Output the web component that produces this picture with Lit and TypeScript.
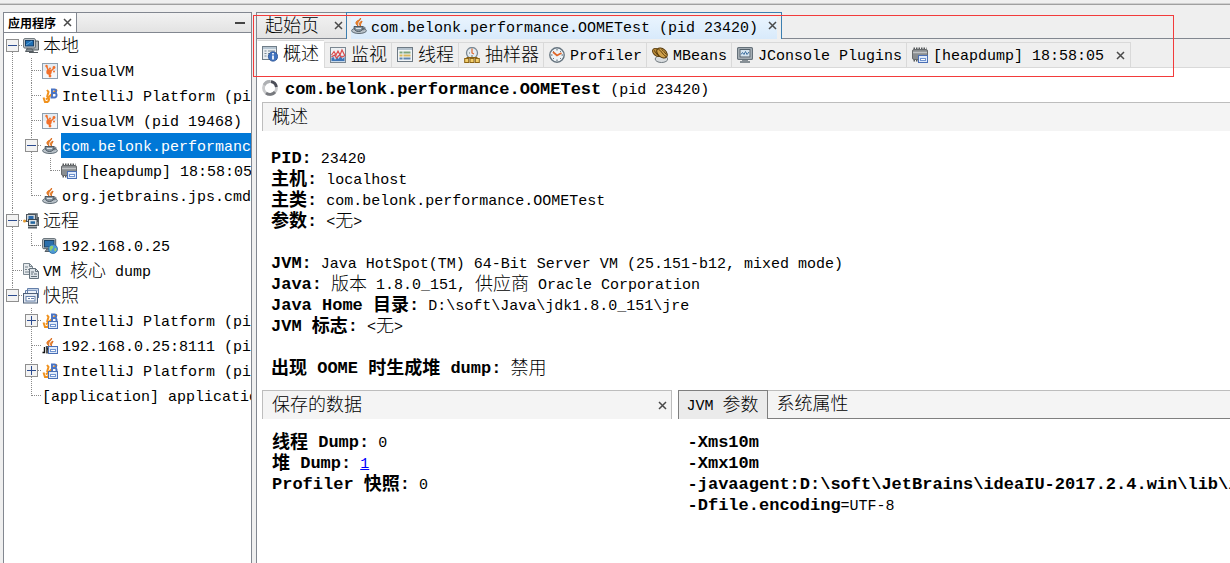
import { LitElement, html, svg, css, nothing, TemplateResult } from "lit";
import { customElement, state } from "lit/decorators.js";

/** Wraps runs of Chinese characters, which are set larger than the Latin cells. */
const t = (s: string) =>
  s.split(/([\u4e00-\u9fff]+)/).map((p) =>
    /[\u4e00-\u9fff]/.test(p) ? html`<span class="c">${p}</span>` : p
  );

const stamp = svg`<rect x="6.5" y="8.5" width="9" height="7" fill="#dfeafa" stroke="#4a6fb5"/><rect x="8.5" y="11.5" width="5" height="2" fill="#fff" stroke="#6f93d0"/>`;
const jb = svg`<path d="M5 2l1.500 2L5 9" fill="none" stroke="#f0911c" stroke-width="2"/><path d="M1.500 9.500L3 14h2.500c2-1.500 1.500-4 .5-5.500M4 11.500L15 1.500" fill="none" stroke="#f0911c" stroke-width="2"/><path d="M9 1.500h3.500c2.500 0 2 3.500 0 3.500 3 0 2.500 4.500 0 4.500H8.500M10 1.500v8M10 5h3" fill="none" stroke="#4a74c4" stroke-width="1.900"/>`;
const flame = svg`<path d="M9.500 0c1 2.500-4.500 3.500-2.500 8C4 5.500 4.500 3.500 7 2.500 8.500 2 9 1 9.500 0zM11 3c.5 1.500-2 2-1.500 5C7 5.500 8.500 4.500 11 3z" fill="#f08a2c" stroke="#d8691a" stroke-width=".9"/>`;
const cup = svg`<ellipse cx="8" cy="12.700" rx="7.400" ry="2.800" fill="#b9c2c9" stroke="#5d6a74"/><path d="M3 8.500h9c0 3-1.500 5-4.500 5S3 11.500 3 8.500z" fill="#8997a2" stroke="#4d5963"/><path d="M12 9c3-.5 2.500 3-.8 2.800" fill="none" stroke="#4d5963"/><path d="M5 10.500h5" stroke="#dfe5ea"/>${flame}`;

const ICONS: Record<string, TemplateResult | any> = {
  pcs: svg`<path d="M4 3h11.500v9H4zM6 14.500h9" fill="#aeb4b8" stroke="#555c61"/><rect x=".7" y=".7" width="11.600" height="9.300" rx="1" fill="#d7dbde" stroke="#565f66"/><rect x="2.500" y="2.500" width="8" height="5.500" fill="#1f6fb4" stroke="#173f68"/><path d="M3 7l6-4" stroke="#5ca4dc"/><path d="M4 11h5l1.500 2.500h-8z" fill="#8a9298" stroke="#555c61"/>`,
  visualvm: svg`<rect x=".5" y=".5" width="15" height="15" fill="#f4f7fa" stroke="#8f9fae"/><path d="M1 1h14v7H1z" fill="#e5ecf2"/><path d="M4.500 3l2.500 6M12 5l-4 4M7 9l1 4" stroke="#f2702a" stroke-width="1.500"/><circle cx="4.500" cy="3" r="1.200" fill="#f2702a"/><circle cx="8" cy="5.500" r="1" fill="#f2702a"/><circle cx="12" cy="4.500" r="1.400" fill="#f2702a"/><circle cx="7" cy="9" r="2.700" fill="#f2702a"/><circle cx="12" cy="8.500" r="1" fill="#f2702a"/><circle cx="8" cy="13" r="1.400" fill="#f2702a"/>`,
  jb,
  cup,
  heap: svg`<path d="M1.500 1.500h13M1.500 13.500h5" stroke="#55585a" stroke-width="2" stroke-dasharray="1.500 1"/><rect x=".5" y="2.500" width="15" height="10" rx="1.500" fill="#898d90" stroke="#66696b"/><path d="M1 5.500h14" stroke="#c0c3c5" stroke-width="1.500"/>${stamp}`,
  remote: svg`<path d="M1 8h3M5 1h9v8M15.500 4v9" stroke="#565f66" fill="none" stroke-width="1.500"/><rect x="3.500" y="1.500" width="9" height="7" fill="#cdd3d7" stroke="#4c555c"/><rect x="5.500" y="3" width="5" height="3.500" fill="#2a6aab"/><rect x="5.500" y="6.500" width="8.500" height="6" fill="#dfe3e6" stroke="#3c464e"/><rect x="7.500" y="8.300" width="4.500" height="2.500" fill="#23659f"/><path d="M5 14.500h9" stroke="#565f66" stroke-width="2"/><circle cx="1.500" cy="8" r="1.500" fill="#e79a2e"/>`,
  host: svg`<rect x=".7" y=".7" width="13" height="10" rx="1" fill="#c6ccd0" stroke="#4e5a63"/><rect x="2.500" y="2.500" width="9.500" height="6.500" fill="#2b70ad" stroke="#1e4667"/><path d="M5 11h4l1 2.500H3z" fill="#858e95" stroke="#555e65"/><circle cx="11" cy="11" r="4.500" fill="#4d9ad8" stroke="#2c6aa0" stroke-width=".8"/><path d="M8 8.500c2-1.500 4-.5 3 1.500s-2 1-1.500 3.500c-2-1-2.500-3.500-1.500-5zM13 10c2 0 2 2 .5 3.500-1.500 0-1.500-2.500-.5-3.500z" fill="#8fd06a"/>`,
  core: svg`<path d="M.5.500h6l3 3v8h-9z" fill="#e5e9ec" stroke="#7d8992"/><path d="M6.500.500v3h3M2 4h3M2 6.500h2M5 6.500h3M2 9h5" fill="none" stroke="#77838c"/><path d="M6.500 5.500h6l3 3v7h-9z" fill="#dde3e8" stroke="#64717b"/><path d="M12.500 5.500v3h3M8 9h3M8 11h2M11 11h3M8 13.500h6" fill="none" stroke="#64717b"/>`,
  snaps: svg`<path d="M4.500 9V.500h11V10M2.500 11V2.500h11V12" fill="#eef3fa" stroke="#647fa9"/><path d="M5 2h10" stroke="#98b0d4"/><rect x=".5" y="5.500" width="14" height="9.500" fill="#e3e9f1" stroke="#4f6079"/><rect x="3" y="8.500" width="9" height="4.500" fill="#fff" stroke="#6580aa"/><path d="M5 10.500h2M8 10.500h3" stroke="#6580aa"/>`,
  jbsnap: svg`${jb}${stamp}`,
  jcupsnap: svg`${flame}<path d="M4 8.500h7c0 3-1 5-4 5z" fill="#8997a2" stroke="#4d5963"/><path d="M2.500 9v5.500H.5M5 9.500v6" stroke="#111" stroke-width="1.400" fill="none"/>${stamp}`,
  overview: svg`<rect x=".5" y=".5" width="14" height="13" fill="#e8edf1" stroke="#6f7d88"/><path d="M1 2h13" stroke="#b7c6d2" stroke-width="2"/><path d="M2.500 5h2M6 5h7M2.500 7.500h2M6 7.500h4M2.500 10h2M6 10h2" stroke="#7b8a95"/><circle cx="11" cy="10.500" r="4.700" fill="#3f72be" stroke="#244c8c" stroke-width=".7"/><path d="M11 9.500v4M11 7v1.500" stroke="#fff" stroke-width="1.700"/>`,
  monitor: svg`<rect x=".5" y=".5" width="15" height="15" fill="#edf1f4" stroke="#7b8791"/><path d="M1 8h14v7H1z" fill="#c8d9ea"/><path d="M1.500 14v-3l2-1 1.500 3 2-3 1.500 2 2-3 2 3 2-2v4" fill="#3e75b7"/><path d="M1.500 8L4 4.500 6 8l2-4 2 4 2-5 3 6M1.500 10l3-2 2 3 3-3 2 2 3-1" fill="none" stroke="#dd4a4a" stroke-width="1.200"/>`,
  threads: svg`<rect x=".5" y=".5" width="15" height="14" fill="#f2f5f7" stroke="#6e7a84"/><path d="M1 2h14" stroke="#b4c2cd" stroke-width="2"/><path d="M2.500 5.500h11" stroke="#7da57a" stroke-width="2"/><path d="M2.500 8.500h11" stroke="#d9b75b" stroke-width="2"/><path d="M2.500 11.500h11" stroke="#5f86b0" stroke-width="2"/><path d="M6 4v9" stroke="#e9eef1"/>`,
  sampler: svg`<circle cx="8" cy="6" r="5.500" fill="#e5ecf2" stroke="#7a8894" stroke-width="1.300"/><path d="M8 1.500V6l2 1" fill="none" stroke="#e0672a" stroke-width="1.200"/><path d="M5 6h1M8 8v2" stroke="#66746f"/><path d="M3 10.500h10M3 10v3M8 10v3M13 10v3" stroke="#8c6415" fill="none"/><rect x=".7" y="11.500" width="4" height="4" fill="#f3cf6d" stroke="#8c6415"/><rect x="6" y="11.500" width="4" height="4" fill="#f3cf6d" stroke="#8c6415"/><rect x="11.300" y="11.500" width="4" height="4" fill="#f3cf6d" stroke="#8c6415"/>`,
  profiler: svg`<circle cx="8" cy="8" r="7.200" fill="#eef3f7" stroke="#66747f" stroke-width="1.400"/><path d="M8 2v1.500M8 12.500V14M2 8h1.500M12.500 8H14M4 4l.8.8M12 4l-.8.8M4 12l.8-.8M12 12l-.8-.8" stroke="#51606b"/><path d="M4 5l4 3.500L12.500 6" fill="none" stroke="#e0672a" stroke-width="1.800"/>`,
  beans: svg`<ellipse cx="9.500" cy="12" rx="6.300" ry="3.500" fill="#d8dcdf" stroke="#70797f"/><ellipse cx="5" cy="5.500" rx="5" ry="3.300" transform="rotate(40 5 5.500)" fill="#b98a3a" stroke="#553708"/><ellipse cx="10" cy="6" rx="6" ry="4" transform="rotate(40 10 6)" fill="#cfa04a" stroke="#553708"/><path d="M6.500 2.500c3 1 3 4 7.500 7M2 3.500c2 1 2 4 5.500 6M9.500 2.500c2 1 3 3 5 5" fill="none" stroke="#553708"/>`,
  jconsole: svg`<rect x=".6" y=".6" width="14.800" height="11.800" rx="1" fill="#b6bec4" stroke="#65717a" stroke-width="1.200"/><rect x="3" y="2.500" width="10" height="7.500" fill="#d5e4ef" stroke="#54616b"/><path d="M4 7.500l1.500-2 1.500 2 1.500-3 1.500 3L12 5" fill="none" stroke="#3d6f9f"/><path d="M5 13h6M3 15h10" stroke="#65717a" stroke-width="1.500"/>`,
  spinner: svg`<circle cx="8" cy="8" r="6.500" fill="none" stroke="#c9cacc" stroke-width="2.800"/><path d="M2 5A6.500 6.500 0 0 1 8 1.500" fill="none" stroke="#aeb0b3" stroke-width="2.800"/><path d="M9 1.600a6.500 6.500 0 0 1 5.400 5.400" fill="none" stroke="#4c4e58" stroke-width="2.800"/><path d="M13 12A6.500 6.500 0 0 1 4 13.100" fill="none" stroke="#77797e" stroke-width="2.800"/>`,
};

const icon = (n: string) =>
  html`<svg class="icon" viewBox="0 0 16 16" aria-hidden="true">${ICONS[n]}</svg>`;

const cross = html`<svg class="cross" viewBox="0 0 9 9" aria-hidden="true">
  <path d="M1 1l7 7M8 1l-7 7" fill="none" stroke="#4a4a4a" stroke-width="1.500" />
</svg>`;

/** Guide cells: v = line, t = tee, l = elbow, . = blank, - / + = expander. */
interface Row {
  guides: string;
  icon?: string;
  label: string;
  last?: boolean;
  first?: boolean;
}

const ROWS: Row[] = [
  { guides: "-", icon: "pcs", label: "本地", first: true },
  { guides: "vt", icon: "visualvm", label: "VisualVM" },
  { guides: "vt", icon: "jb", label: "IntelliJ Platform (pid" },
  { guides: "vt", icon: "visualvm", label: "VisualVM (pid 19468)" },
  { guides: "v-", icon: "cup", label: "com.belonk.performance" },
  { guides: "vvl", icon: "heap", label: "[heapdump] 18:58:05" },
  { guides: "vl", icon: "cup", label: "org.jetbrains.jps.cmdl" },
  { guides: "-", icon: "remote", label: "远程" },
  { guides: "vl", icon: "host", label: "192.168.0.25" },
  { guides: "t", icon: "core", label: "VM 核心 dump" },
  { guides: "-", icon: "snaps", label: "快照", last: true },
  { guides: ".+", icon: "jbsnap", label: "IntelliJ Platform (pid" },
  { guides: ".t", icon: "jcupsnap", label: "192.168.0.25:8111 (pid" },
  { guides: ".+", icon: "jbsnap", label: "IntelliJ Platform (pid" },
  { guides: ".l", label: "[application] application" },
];

const VIEWS = [
  ["overview", "概述"],
  ["monitor", "监视"],
  ["threads", "线程"],
  ["sampler", "抽样器"],
  ["profiler", "Profiler"],
  ["beans", "MBeans"],
  ["jconsole", "JConsole Plugins"],
  ["heap", "[heapdump] 18:58:05"],
];

const FACTS: ([string, string] | null)[] = [
  ["PID:", "23420"],
  ["主机:", "localhost"],
  ["主类:", "com.belonk.performance.OOMETest"],
  ["参数:", "<无>"],
  null,
  ["JVM:", "Java HotSpot(TM) 64-Bit Server VM (25.151-b12, mixed mode)"],
  ["Java:", "版本 1.8.0_151, 供应商 Oracle Corporation"],
  ["Java Home 目录:", "D:\\soft\\Java\\jdk1.8.0_151\\jre"],
  ["JVM 标志:", "<无>"],
  null,
  ["出现 OOME 时生成堆 dump:", "禁用"],
];

const ARGS: [string, string][] = [
  ["-Xms10m", ""],
  ["-Xmx10m", ""],
  ["-javaagent:D:\\soft\\JetBrains\\ideaIU-2017.2.4.win\\lib\\idea", ""],
  ["-Dfile.encoding", "=UTF-8"],
];

@customElement("app-root")
export class AppRoot extends LitElement {
  @state() private selected = 4;
  @state() private view = 0;

  static styles = css`
    :host {
      display: flex;
      flex-direction: column;
      height: 100vh;
      overflow: hidden;
      background: #efefef;
      color: #000;
      font: 15px/21px "Liberation Mono", "Noto Sans CJK SC", monospace;
    }
    * { box-sizing: border-box; }
    button {
      font: inherit;
      color: inherit;
      background: none;
      border: 0;
      margin: 0;
      padding: 0;
      white-space: pre;
    }
    .c {
      font-size: 18px;
      font-weight: 300;
      line-height: 0;
      vertical-align: -1px;
    }
    b { font-size: 17px; line-height: 0; }
    b .c { font-weight: 700; }
    .icon { width: 16px; height: 16px; flex: none; display: block; }
    .cross { width: 9px; height: 9px; display: block; }
    .toolbar {
      flex: none;
      height: 5px;
      border-bottom: 1px solid #a0a0a0;
      box-shadow: inset 0 -1px #cfcfcf;
    }
    .desk {
      flex: 1;
      min-height: 0;
      display: grid;
      grid-template-columns: 249px minmax(0, 1fr);
      gap: 4px;
      padding: 7px 0 0 3px;
      position: relative;
    }
    .side {
      display: flex;
      flex-direction: column;
      min-width: 0;
      background: #fff;
      border: 1px solid #828790;
      border-bottom: 0;
    }
    .side-head {
      flex: none;
      display: flex;
      align-items: center;
      height: 20px;
      border-bottom: 1px solid #828790;
      background: linear-gradient(#f2f2f2, #e3e3e3);
    }
    .side-tab {
      display: flex;
      align-items: center;
      gap: 7px;
      align-self: stretch;
      padding: 0 4px;
      background: #fff;
      border-right: 1px solid #828790;
      font: bold 12px/19px "Noto Sans CJK SC", sans-serif;
    }
    .min { width: 10px; height: 2px; background: #444; margin: 0 6px 0 auto; }
    .tree { list-style: none; margin: 0; padding: 0; overflow: hidden; }
    .row { display: flex; align-items: center; height: 25px; }
    .guide { width: 19px; height: 25px; flex: none; display: block; }
    .guide:first-child { margin-left: -1px; }
    .row .icon { margin: 0 3px 0 1px; }
    .node {
      flex: 1;
      min-width: 0;
      height: 25px;
      padding: 3px 0 0 1px;
      text-align: left;
      overflow: hidden;
    }
    .node.on { background: #0078d7; color: #fff; }
    .main {
      display: flex;
      flex-direction: column;
      min-width: 0;
      background: #fff;
      border-left: 1px solid #828790;
    }
    .docs {
      flex: none;
      display: flex;
      height: 27px;
      background: linear-gradient(#828790, #828790) bottom / 100% 1px no-repeat #efefef;
    }
    .doc {
      display: flex;
      align-items: center;
      padding: 4px 3px 0 8px;
      border-top: 1px solid #828790;
    }
    .start {
      gap: 15px;
      border-bottom: 1px solid #828790;
      background: linear-gradient(#f2f2f2, #e3e3e3);
    }
    .current {
      gap: 4px;
      padding: 4px 4px 0;
      border: 1px solid #3c7fb1;
      border-bottom: 0;
      background: linear-gradient(#e9f4fe, #d8eafb) content-box, #efefef;
    }
    .doc .icon { margin-bottom: 4px; }
    .doc .cross { margin-bottom: 5px; }
    .current .cross { margin-left: 6px; }
    .views {
      flex: none;
      display: flex;
      align-items: flex-end;
      height: 29px;
      background: linear-gradient(#d9d9d9, #d9d9d9) bottom / 100% 1px no-repeat #efefef;
    }
    .view {
      display: flex;
      align-items: center;
      gap: 5px;
      height: 26px;
      padding: 3px 4px 0 5px;
      border: solid #d9d9d9;
      border-width: 1px 0 1px 1px;
    }
    .view:last-child { border-right-width: 1px; }
    .view .icon { margin-bottom: 3px; }
    .view .cross { margin: 0 1px 3px 7px; }
    .view.on {
      height: 28px;
      padding: 2px 5px 0 4px;
      background: #fff;
      border-bottom-color: #fff;
      border-left-color: #fff;
    }
    .body { padding: 10px 0 0 5px; overflow: hidden; }
    .title {
      display: flex;
      align-items: center;
      gap: 7px;
      height: 24px;
      margin: 0;
      font: inherit;
      white-space: pre;
    }
    .title .icon { margin-bottom: 5px; }
    .bar {
      display: flex;
      align-items: center;
      justify-content: space-between;
      height: 29px;
      margin: 0;
      padding: 2px 4px 0 9px;
      border: solid #bdbdbd;
      border-width: 1px 0 0 1px;
      background: #f4f4f4;
      font: inherit;
    }
    .bar .cross { margin-bottom: 2px; }
    .facts { margin: 0; padding: 18px 0 10px 9px; }
    .fact, .blank { height: 21px; white-space: pre; }
    .fact dt, .fact dd { display: inline; margin: 0; }
    .split {
      display: grid;
      grid-template-columns: minmax(0, 410fr) minmax(0, 553fr);
      gap: 6px;
    }
    .saved .bar { border-right-width: 1px; }
    .lines { margin: 0; padding: 14px 0 0 10px; }
    .seg { display: flex; height: 29px; background: #f4f4f4; }
    .seg button {
      padding: 2px 9px 0;
      border: solid #bdbdbd;
      border-width: 1px 0;
      border-bottom-color: #7f7f7f;
    }
    .seg button.on {
      padding: 2px 8px 0;
      background: #ebebeb;
      border: solid #7f7f7f;
      border-width: 1px 1px 0;
    }
    .seg .rest { flex: 1; border-top: 1px solid #bdbdbd; border-bottom: 1px solid #7f7f7f; }
    a { color: #00f; }
    .mark {
      position: absolute;
      left: 253px;
      right: 56px;
      top: 10px;
      height: 62px;
      border: 1px solid #f23b3b;
      pointer-events: none;
    }
  `;

  private guide(kind: string, row: Row) {
    const dots = (d: string) =>
      svg`<path d=${d} fill="none" stroke="#8a8a8a" stroke-dasharray="1 1" />`;
    if (kind === "-" || kind === "+") {
      const above = row.first ? nothing : dots("M9.5 0V6");
      const below = row.last ? nothing : dots("M9.5 19V25");
      return html`<svg class="guide" viewBox="0 0 19 25" role="img" aria-label=${kind === "-" ? "折叠" : "展开"}>
        ${above}${below}${dots("M16 12.500H19")}
        <rect x="3.500" y="6.500" width="12" height="12" fill="#f3f3f3" stroke="#8f8f8f" />
        <path d="M5 12.500h9" stroke="#2b4b8f" />
        ${kind === "+" ? svg`<path d="M9.500 8v9" stroke="#2b4b8f" />` : nothing}
      </svg>`;
    }
    const paths: Record<string, string> = {
      v: "M9.5 0V25",
      t: "M9.5 0V25M10 12.5H19",
      l: "M9.5 0V13M10 12.5H19",
    };
    return html`<svg class="guide" viewBox="0 0 19 25" aria-hidden="true">
      ${paths[kind] ? dots(paths[kind]) : nothing}
    </svg>`;
  }

  render() {
    return html`
      <div class="toolbar"></div>
      <div class="desk">
        <aside class="side">
          <div class="side-head">
            <div class="side-tab">应用程序 ${cross}</div>
            <span class="min"></span>
          </div>
          <ul class="tree">
            ${ROWS.map(
              (r, i) => html`<li class="row">
                ${[...r.guides].map((k) => this.guide(k, r))}${r.icon ? icon(r.icon) : nothing}
                <button class="node ${i === this.selected ? "on" : ""}" @click=${() => (this.selected = i)}>${t(r.label)}</button>
              </li>`
            )}
          </ul>
        </aside>
        <main class="main">
          <div class="docs">
            <button class="doc start"><span>${t("起始页")}</span>${cross}</button>
            <button class="doc current">${icon("cup")}<span>com.belonk.performance.OOMETest (pid 23420)</span>${cross}</button>
          </div>
          <nav class="views">
            ${VIEWS.map(
              ([ic, label], i) => html`<button class="view ${i === this.view ? "on" : ""}" @click=${() => (this.view = i)}>${icon(ic)}<span>${t(label)}</span>${i === VIEWS.length - 1 ? cross : nothing}</button>`
            )}
          </nav>
          <div class="body">
            <h1 class="title">${icon("spinner")}<span><b>com.belonk.performance.OOMETest</b> (pid 23420)</span></h1>
            <h2 class="bar"><span>${t("概述")}</span></h2>
            <dl class="facts">
              ${FACTS.map((f) =>
                f
                  ? html`<div class="fact"><dt><b>${t(f[0])}</b></dt> <dd>${t(f[1])}</dd></div>`
                  : html`<div class="blank"></div>`
              )}
            </dl>
            <div class="split">
              <section class="saved">
                <h2 class="bar"><span>${t("保存的数据")}</span>${cross}</h2>
                <div class="lines">
                  <div class="fact"><b>${t("线程 Dump:")}</b> 0</div>
                  <div class="fact"><b>${t("堆 Dump:")}</b> <a href="#heap">1</a></div>
                  <div class="fact"><b>${t("Profiler 快照:")}</b> 0</div>
                </div>
              </section>
              <section>
                <div class="seg">
                  <button class="on">${t("JVM 参数")}</button><button>${t("系统属性")}</button><span class="rest"></span>
                </div>
                <div class="lines">
                  ${ARGS.map(([k, v]) => html`<div class="fact"><b>${k}</b>${v}</div>`)}
                </div>
              </section>
            </div>
          </div>
        </main>
        <div class="mark"></div>
      </div>
    `;
  }
}
